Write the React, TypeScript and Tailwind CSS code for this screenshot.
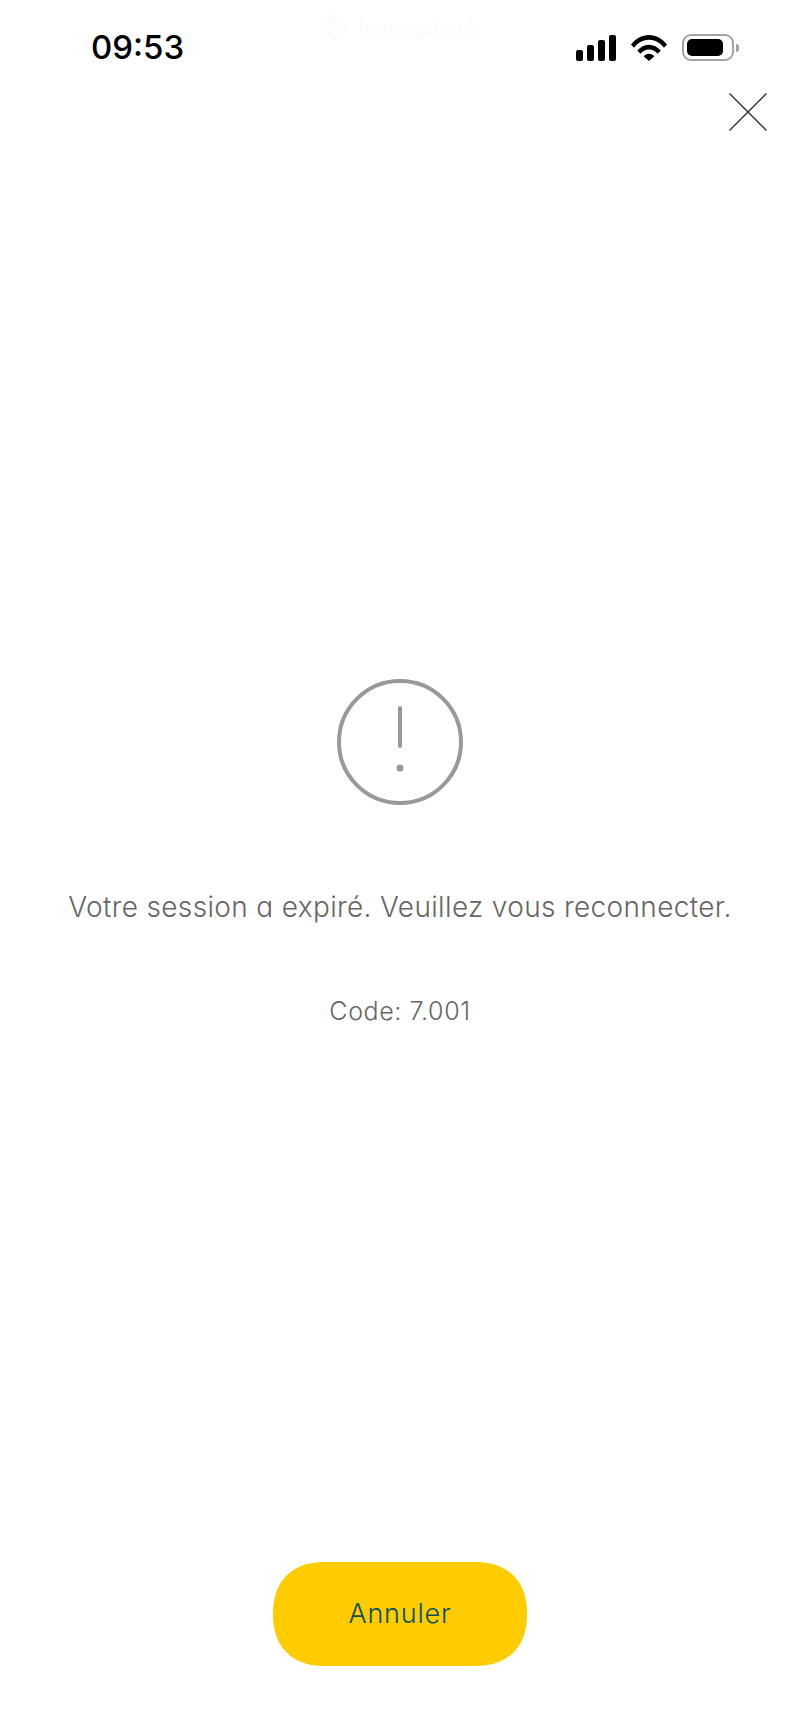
function SignalIcon() {
  return (
    <svg width="40" height="26" viewBox="0 0 40 26" fill="#000">
      <rect x="0" y="15" width="7" height="11" rx="2" />
      <rect x="11" y="10" width="7" height="16" rx="2" />
      <rect x="22" y="5" width="7" height="21" rx="2" />
      <rect x="33" y="0" width="7" height="26" rx="2" />
    </svg>
  );
}

function WifiIcon() {
  return (
    <svg width="36" height="26" viewBox="0 0 36 26" fill="#000">
      <path d="M0 9.5C4.6 3.6 10.9 0 18 0s13.4 3.6 18 9.5l-3 3.2C29 7.700 23.800 4.800 18 4.800S7 7.700 3 12.700L0 9.500Z" />
      <path d="M6.300 15.500C9.300 11.900 13.400 9.700 18 9.700s8.700 2.200 11.700 5.800l-3 3.200C24.400 16 21.400 14.400 18 14.400s-6.400 1.600-8.700 4.300l-3-3.200Z" />
      <path d="M12.600 21.200c1.400-1.500 3.300-2.400 5.400-2.400s4 .9 5.400 2.400L18 26l-5.400-4.800Z" />
    </svg>
  );
}

function BatteryIcon() {
  return (
    <div className="flex items-center gap-[2px]">
      <div className="flex h-[27px] w-[52px] items-center rounded-[9px] border-[2px] border-[#a3a3a3] p-[3px]">
        <div className="h-full w-[36px] rounded-[5px] bg-black" />
      </div>
      <div className="h-[8px] w-[3px] rounded-r-full bg-[#a3a3a3]" />
    </div>
  );
}

function CloseIcon() {
  return (
    <svg width="38" height="38" viewBox="0 0 38 38" fill="none" stroke="#333333" strokeWidth="1.400">
      <path d="M0.500 0.500L37.500 37.500M37.500 0.500L0.500 37.500" />
    </svg>
  );
}

function AlertIcon() {
  return (
    <svg width="126" height="126" viewBox="0 0 126 126" fill="none" stroke="#999999" strokeWidth="4">
      <circle cx="63" cy="63" r="61" />
      <path d="M63 29V67" strokeLinecap="round" />
      <circle cx="63" cy="89" r="3.500" fill="#999999" stroke="none" />
    </svg>
  );
}

export default function App() {
  return (
    <div className="relative flex h-[1730px] w-[800px] flex-col bg-white font-['Inter',sans-serif]">
      {/* logo a peine visible derriere la barre de statut */}
      <div className="absolute left-[320px] top-[14px] flex items-center gap-[10px]">
        <svg width="28" height="26" viewBox="0 0 28 26" fill="none" stroke="#fafafa" strokeWidth="2">
          <path d="M14 1L27 13L14 25L1 13ZM7.500 7L20.500 19M20.500 7L7.500 19" />
        </svg>
        <span className="font-['Liberation_Serif',serif] text-[24px] leading-[26px] text-[#fbfbfb]">homegate.ch</span>
      </div>

      <div className="relative flex h-[93px] shrink-0 items-start justify-between pl-[91px] pr-[61px] pt-[31px]">
        <span className="pt-[1px] text-[33px] leading-[31px] font-medium text-black">09:53</span>
        <div className="flex items-center gap-[15px] pt-[3px]">
          <SignalIcon />
          <WifiIcon />
          <BatteryIcon />
        </div>
      </div>

      <div className="flex shrink-0 justify-end pr-[33px]">
        <CloseIcon />
      </div>

      <div className="flex flex-col items-center pt-[548px]">
        <AlertIcon />
        <p className="mt-[85px] text-[28px] leading-[34px] font-light tracking-[0.35px] text-[#666666] [font-feature-settings:'cv11']">
          Votre session a expiré. Veuillez vous reconnecter.
        </p>
        <p className="mt-[73px] text-[25px] leading-[28px] font-light tracking-[0.6px] text-[#666666]">Code: 7.001</p>
      </div>

      <div className="mt-auto flex justify-center pb-[64px]">
        <button
          type="button"
          className="flex h-[104px] w-[254px] items-center justify-center rounded-[52px] bg-[#ffcc00] text-[27px] font-light tracking-[0.8px] text-[#0b4f5c] [corner-shape:superellipse(1.2)]"
        >
          Annuler
        </button>
      </div>
    </div>
  );
}
